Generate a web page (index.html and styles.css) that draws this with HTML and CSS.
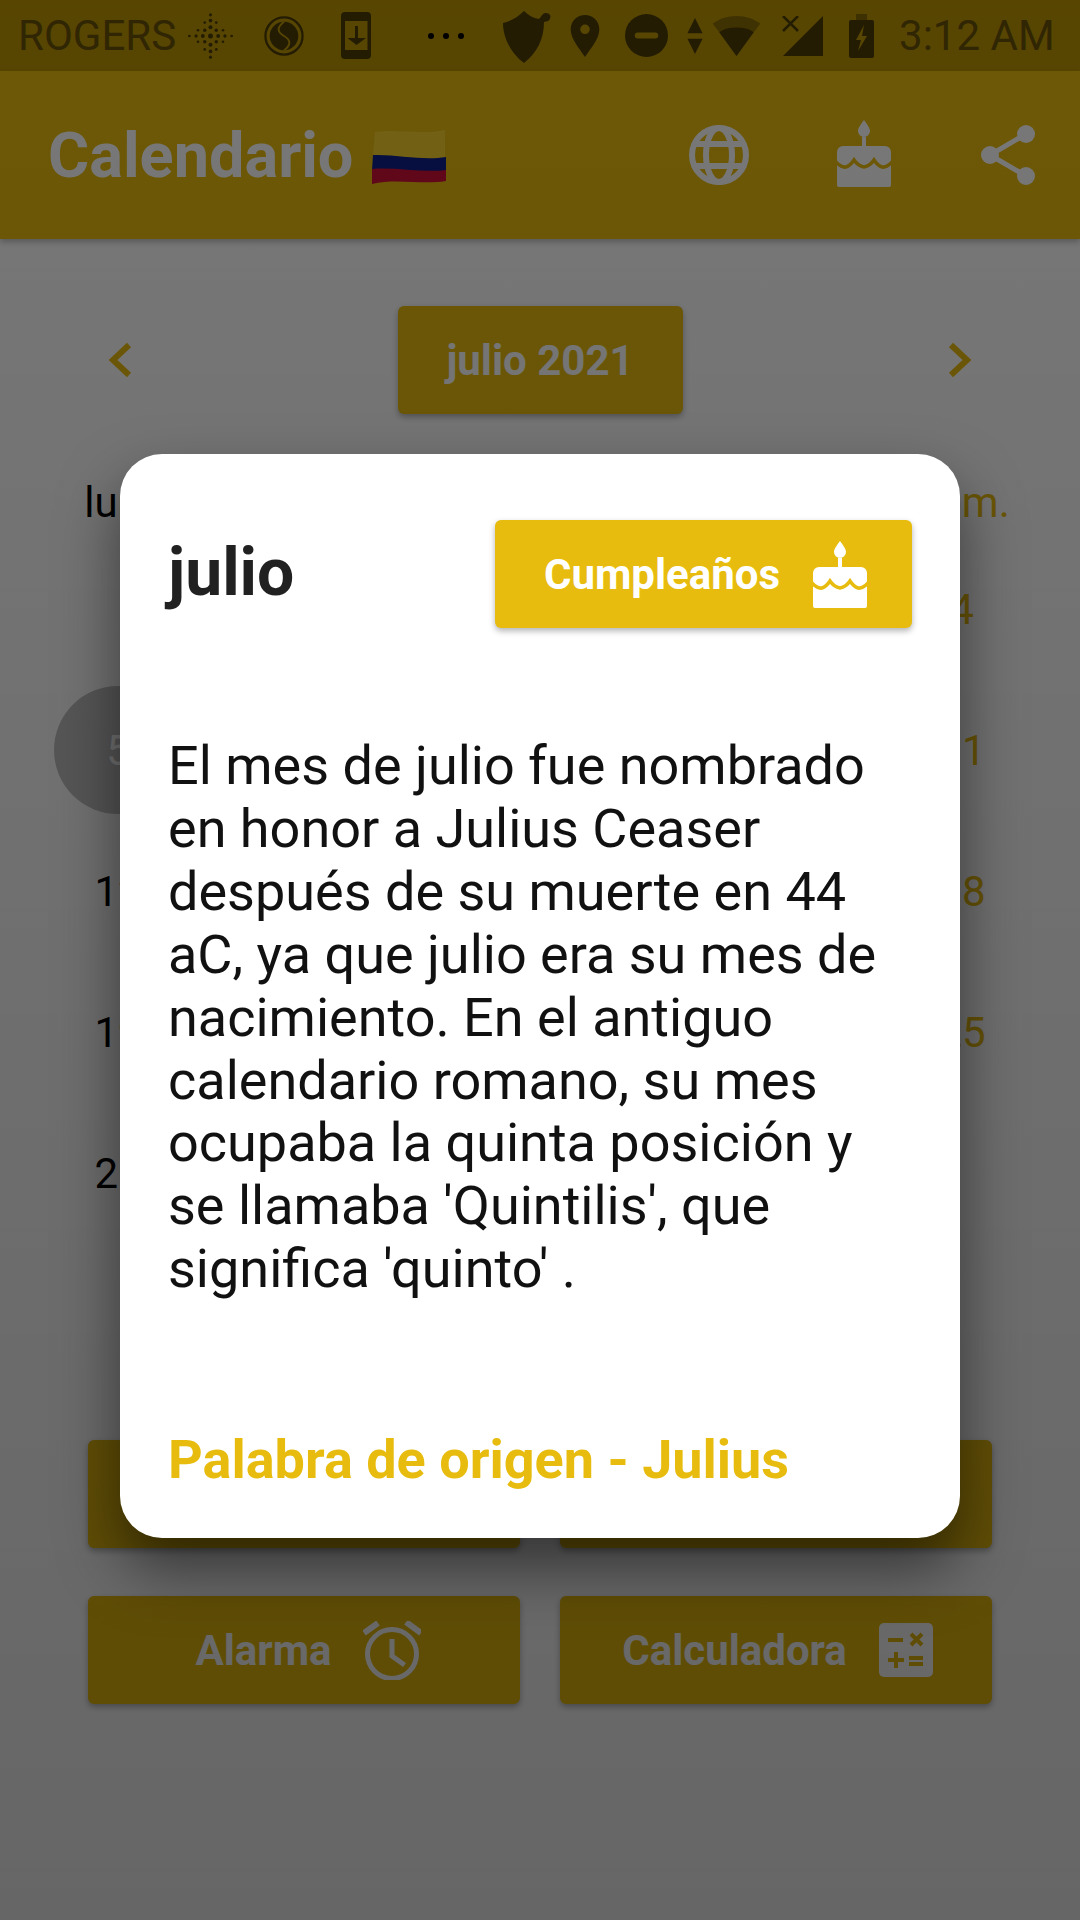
FILE: index.html
```html
<!DOCTYPE html>
<html lang="es">
  <head>
    <meta charset="UTF-8" />
    <meta name="viewport" content="width=device-width, initial-scale=1.0" />
    <title>Calendario</title>
    <link rel="stylesheet" href="styles.css">
  </head>
  <body>
    <div class="pantalla">
      <!-- barra de estado -->
      <div class="estado">
        <span class="operador">ROGERS</span>
        <svg class="ico-rombo" width="49" height="50" viewBox="0 0 50 52" fill="currentColor">
          <circle cx="25" cy="4" r="1.600"/><circle cx="25" cy="10" r="1.900"/><circle cx="25" cy="17" r="2.100"/><circle cx="25" cy="26" r="2.600"/><circle cx="25" cy="35" r="2.100"/><circle cx="25" cy="42" r="1.900"/><circle cx="25" cy="48" r="1.600"/>
          <circle cx="19" cy="12" r="1.400"/><circle cx="31" cy="12" r="1.400"/><circle cx="19" cy="20" r="1.800"/><circle cx="31" cy="20" r="1.800"/><circle cx="19" cy="32" r="1.800"/><circle cx="31" cy="32" r="1.800"/><circle cx="19" cy="40" r="1.400"/><circle cx="31" cy="40" r="1.400"/>
          <circle cx="17" cy="26" r="2"/><circle cx="33" cy="26" r="2"/><circle cx="10" cy="26" r="1.700"/><circle cx="40" cy="26" r="1.700"/><circle cx="3" cy="26" r="1.400"/><circle cx="47" cy="26" r="1.400"/>
          <circle cx="12" cy="20" r="1.400"/><circle cx="38" cy="20" r="1.400"/><circle cx="12" cy="32" r="1.400"/><circle cx="38" cy="32" r="1.400"/>
        </svg>
        <svg class="ico-s" width="40" height="40" viewBox="0 0 42 42">
          <circle cx="21" cy="21" r="19.500" fill="none" stroke="currentColor" stroke-width="2.400"/>
          <circle cx="21" cy="21" r="15" fill="currentColor"/>
          <path d="M21 6C13 12 14 17 21 21s8 9 0 15" fill="none" stroke="#ba9304" stroke-width="2"/>
        </svg>
        <svg class="ico-descarga" width="30" height="47" viewBox="0 0 30 47">
          <rect width="30" height="47" rx="4" fill="currentColor"/>
          <rect x="4" y="9" width="22.500" height="29" fill="#ba9304"/>
          <path d="M14 14h3v12h8l-9.500 7-9-7h7.500z" fill="currentColor"/>
        </svg>
        <span class="puntos"><i></i><i></i><i></i></span>
        <svg class="ico-escudo" width="48" height="52" viewBox="0 0 48 52" fill="currentColor">
          <path d="M21 0c4 4 9 7 15 8l4-5c2-2 6-1 7 1s0 5-2 6l-4 1c0 17-7 31-20 41C8 42 0 27 0 12 8 10 15 6 21 0z"/>
        </svg>
        <svg class="ico-pin" width="30" height="42" viewBox="0 0 30 44" fill="currentColor">
          <path fill-rule="evenodd" d="M15 0c8 0 15 6 15 15 0 10-9 20-15 29C9 35 0 25 0 15 0 6 7 0 15 0zm0 10a5 5 0 1 0 0 10 5 5 0 0 0 0-10z"/>
        </svg>
        <svg class="ico-no" width="43" height="43" viewBox="0 0 44 44">
          <circle cx="22" cy="22" r="22" fill="currentColor"/>
          <rect x="10" y="19" width="24" height="6" rx="3" fill="#ba9304"/>
        </svg>
        <svg class="ico-flechas" width="16" height="36" viewBox="0 0 16 38" fill="currentColor">
          <path d="M8 0l8 16H0zM0 22h16L8 38z"/>
        </svg>
        <svg class="ico-wifi" width="51" height="40" viewBox="0 0 50 42" fill="currentColor">
          <path opacity=".45" d="M25 0c10 0 18 3 25 8L25 42 0 8C7 3 15 0 25 0z"/>
          <path d="M25 12c7 0 13 1 18 5L25 42 7 17c5-4 11-5 18-5z"/>
        </svg>
        <svg class="ico-senal" width="41" height="40" viewBox="0 0 41 40">
          <path d="M41 0v40H1z" fill="currentColor"/>
          <path d="M1 0l15 15M16 0L1 15" stroke="currentColor" stroke-width="2.500"/>
        </svg>
        <svg class="ico-bateria" width="25" height="44" viewBox="0 0 25 44">
          <path d="M7 0h11v6H7z" fill="currentColor" opacity=".5"/>
          <path d="M2 6h21a2 2 0 0 1 2 2v34a2 2 0 0 1-2 2H2a2 2 0 0 1-2-2V8a2 2 0 0 1 2-2z" fill="currentColor"/>
          <path d="M15 11l-8 15h5l-3 11 9-15h-5z" fill="#ba9304"/>
        </svg>
        <span class="hora">3:12 AM</span>
      </div>

      <!-- barra de la app -->
      <div class="barra">
        <h1 class="titulo">Calendario</h1>
        <svg class="bandera" width="74" height="54" viewBox="0 0 74 54">
          <path d="M3 2C25-1 50 5 73 0v28C50 31 25 24 1 26z" fill="#f5cf2c"/>
          <path d="M1 25c24-1 49 6 73 2v14c-24 3-49-3-74-1z" fill="#0c2088"/>
          <path d="M0 39c25-2 50 4 74 1v11c-24 4-50-3-74 3z" fill="#d00f38"/>
        </svg>
        <span class="acciones">
          <svg width="60" height="60" viewBox="0 0 60 60" fill="none" stroke="currentColor" stroke-width="6">
            <circle cx="30" cy="30" r="27"/>
            <ellipse cx="30" cy="30" rx="13" ry="27"/>
            <path d="M5 19h50M5 41h50"/>
          </svg>
          <svg class="cumple" width="54" height="67" viewBox="0 0 54 67" fill="currentColor">
            <path d="M27 0c3 4 6 8 6 11a6 6 0 0 1-12 0c0-3 3-7 6-11zM25 17h4v10h-4z"/>
            <path d="M6 26h42a6 6 0 0 1 6 6v33a2 2 0 0 1-2 2H2a2 2 0 0 1-2-2V32a6 6 0 0 1 6-6z"/>
            <path d="M-2 41Q4 48 9 47 13 46 17 40 21 46 27 47 33 46 37 40 41 46 45 47 50 48 56 41" fill="none" stroke="#e8bc0e" stroke-width="3.500"/>
          </svg>
          <svg class="compartir" width="54" height="60" viewBox="0 0 54 60" fill="currentColor">
            <circle cx="45" cy="9" r="9"/><circle cx="9" cy="30" r="9"/><circle cx="45" cy="51" r="9"/>
            <path d="M45 9L9 30l36 21" fill="none" stroke="currentColor" stroke-width="5"/>
          </svg>
        </span>
      </div>

      <div class="contenido">
        <!-- mes -->
        <div class="mes">
          <svg class="flecha" width="24" height="36" viewBox="0 0 24 36" fill="none" stroke="currentColor" stroke-width="6"><path d="M21 3L5 18l16 15"/></svg>
          <button class="boton boton-mes">julio 2021</button>
          <svg class="flecha" width="24" height="36" viewBox="0 0 24 36" fill="none" stroke="currentColor" stroke-width="6"><path d="M3 3l16 15L3 33"/></svg>
        </div>

        <!-- solo se ven las columnas de los lados -->
        <div class="calendario">
          <span class="cabecera">lun.</span><span class="cabecera domingo">dom.</span>
          <span class="dia"></span><span class="dia domingo">4</span>
          <span class="dia"><b class="hoy">5</b></span><span class="dia domingo">11</span>
          <span class="dia">12</span><span class="dia domingo">18</span>
          <span class="dia">19</span><span class="dia domingo">25</span>
          <span class="dia">26</span><span class="dia"></span>
        </div>

        <div class="botones">
          <button class="boton"></button>
          <button class="boton"></button>
          <button class="boton boton-alarma">Alarma
            <svg width="58" height="59" viewBox="0 0 58 59" fill="none" stroke="currentColor" stroke-width="5">
              <circle cx="29" cy="33" r="24.500"/>
              <path d="M29 18v17l12.500 9"/>
              <path d="M1 12L15 2M43 1l15 11" stroke-width="6"/>
            </svg>
          </button>
          <button class="boton boton-calc">Calculadora
            <svg width="54" height="54" viewBox="0 0 54 54">
              <rect width="54" height="54" rx="5" fill="currentColor"/>
              <path d="M9 17h15M32 11l11 11M43 11L32 22M9 37h16M17 29v16M30 35h14M30 41h14" stroke="#e8bc0e" stroke-width="4" fill="none"/>
            </svg>
          </button>
        </div>
      </div>

      <!-- fondo oscuro y dialogo -->
      <div class="velo"></div>
      <div class="dialogo">
        <div class="dialogo-cabecera">
          <h2 class="dialogo-titulo">julio</h2>
          <button class="boton boton-cumple">Cumpleaños
            <svg width="54" height="67" viewBox="0 0 54 67" fill="currentColor">
              <path d="M27 0c3 4 6 8 6 11a6 6 0 0 1-12 0c0-3 3-7 6-11zM25 17h4v10h-4z"/>
              <path d="M6 26h42a6 6 0 0 1 6 6v33a2 2 0 0 1-2 2H2a2 2 0 0 1-2-2V32a6 6 0 0 1 6-6z"/>
              <path d="M-2 41Q4 48 9 47 13 46 17 40 21 46 27 47 33 46 37 40 41 46 45 47 50 48 56 41" fill="none" stroke="#e8bc0e" stroke-width="3.500"/>
            </svg>
          </button>
        </div>
        <p class="dialogo-texto">El mes de julio fue nombrado en honor a Julius Ceaser después de su muerte en 44 aC, ya que julio era su mes de nacimiento. En el antiguo calendario romano, su mes ocupaba la quinta posición y se llamaba 'Quintilis', que significa 'quinto' .</p>
        <p class="dialogo-origen">Palabra de origen - Julius</p>
      </div>
    </div>
  </body>
</html>
```

FILE: styles.css
```css
* {
  box-sizing: border-box;
}

body {
  margin: 0;
  font-family: Roboto, "Liberation Sans", sans-serif;
}

.pantalla {
  position: relative;
  width: 1080px;
  height: 1920px;
  overflow: hidden;
  background: white;
}

/* barra de estado */
.estado {
  height: 71px;
  display: flex;
  align-items: center;
  padding-left: 18px;
  background: #ba9304;
  color: #4a3c04;
  white-space: nowrap;
}

.operador,
.hora {
  font-size: 42px;
  color: #665006;
}

.ico-rombo { margin-left: 10px; }
.ico-s { margin-left: 29px; }
.ico-descarga { margin-left: 37px; }
.ico-escudo { margin-left: 39px; margin-top: 2px; }
.ico-pin { margin-left: 19px; }
.ico-no { margin-left: 25px; }
.ico-flechas { margin-left: 19px; }
.ico-wifi { margin-left: 8px; }
.ico-senal { margin-left: 20px; }
.ico-bateria { margin-left: 26px; }
.hora { margin-left: 25px; }

.puntos {
  display: flex;
  gap: 9px;
  margin-left: 57px;
}

.puntos i {
  width: 6px;
  height: 6px;
  border-radius: 50%;
  background: #000;
}

/* barra de la app */
.barra {
  position: relative;
  height: 168px;
  display: flex;
  align-items: center;
  padding: 0 45px 0 48px;
  background: #e8bc0e;
  color: white;
  box-shadow: 0 3px 6px rgba(0, 0, 0, 0.25);
}

.titulo {
  margin: 0;
  font-size: 63px;
  font-weight: 700;
}

.bandera {
  margin-left: 19px;
  margin-top: 4px;
}

.acciones {
  margin-left: auto;
  display: flex;
  align-items: center;
  gap: 88px;
}

.cumple {
  margin-top: -4px;
}

.compartir {
  margin-left: 2px;
}

/* mes y calendario */
.contenido {
  padding: 67px 88px 0;
}

.mes {
  display: flex;
  align-items: center;
  justify-content: space-between;
  padding: 0 20px;
  color: #e8bc0e;
}

.boton {
  height: 108px;
  border: 0;
  border-radius: 6px;
  background: #e8bc0e;
  color: white;
  font-family: inherit;
  font-size: 42px;
  font-weight: 700;
  box-shadow: 0 3px 6px rgba(0, 0, 0, 0.3);
  display: flex;
  align-items: center;
  justify-content: center;
}

.boton-mes {
  width: 285px;
}

.boton-alarma {
  gap: 31px;
  padding-left: 14px;
}

.boton-calc {
  gap: 32px;
  padding-left: 9px;
}

.boton-cumple {
  width: 417px;
  gap: 33px;
  padding-left: 10px;
}

.calendario {
  display: grid;
  grid-template-columns: 128px 128px;
  grid-template-rows: 131px;
  grid-auto-rows: 141px;
  justify-content: space-between;
  justify-items: center;
  margin: 0 -34px;
  font-size: 42px;
  color: #000;
}

.cabecera {
  padding-top: 64px;
  height: 131px;
}

.dia {
  display: flex;
  align-items: center;
  justify-content: center;
  width: 128px;
  height: 128px;
}

.domingo {
  color: #e8bc0e;
}

.hoy {
  display: flex;
  align-items: center;
  justify-content: center;
  width: 128px;
  height: 128px;
  border-radius: 50%;
  background: #c0c0c0;
  color: white;
  font-weight: 400;
}

.botones {
  position: absolute;
  top: 1440px;
  left: 88px;
  display: grid;
  grid-template-columns: 432px 432px;
  gap: 48px 40px;
}

/* fondo oscuro */
.velo {
  position: absolute;
  inset: 0;
  background: linear-gradient(rgba(0, 0, 0, 0.53), rgba(0, 0, 0, 0.6));
}

/* dialogo */
.dialogo {
  position: absolute;
  left: 120px;
  top: 454px;
  width: 840px;
  height: 1084px;
  padding: 66px 48px 0;
  background: white;
  border-radius: 42px;
  box-shadow: 0 30px 60px rgba(0, 0, 0, 0.5);
  display: flex;
  flex-direction: column;
}

.dialogo-cabecera {
  display: flex;
  align-items: center;
  justify-content: space-between;
}

.dialogo-titulo {
  margin: -4px 0 0;
  font-size: 66px;
  font-weight: 700;
  color: #212121;
}

.dialogo-texto {
  margin: 107px 0 0;
  font-size: 54px;
  line-height: 62.9px;
  color: #111;
}

.dialogo-origen {
  margin: auto 0 47px;
  font-size: 54px;
  font-weight: 700;
  color: #e8bc0e;
}
```
